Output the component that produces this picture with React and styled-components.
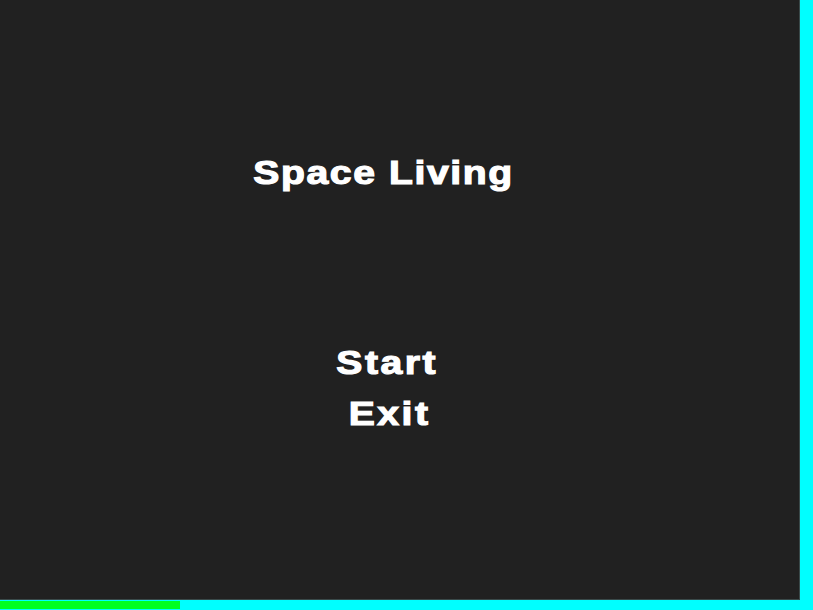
import styled, { createGlobalStyle } from 'styled-components';

const GlobalStyle = createGlobalStyle`
  html, body {
    margin: 0;
    padding: 0;
    background-color: #00ffff;
  }
`;

const Screen = styled.div`
  box-sizing: border-box;
  display: flex;
  flex-direction: column;
  width: 800px;
  height: 600px;
  background-color: #212121;
  border-right: 1px solid #3a4a4a;
  border-bottom: 1px solid #3a4a4a;
  font-family: 'Liberation Sans', Arial, sans-serif;
  font-weight: 700;
  color: #ffffff;
`;

const Title = styled.h1`
  margin: 0;
  padding: 147px 0 0 0;
  width: 767px;
  text-align: center;
  font-size: 34px;
  line-height: 51px;
  font-weight: 700;
  -webkit-text-stroke: 1.2px #ffffff;
  letter-spacing: 1.4px;
  transform: scaleX(1.15);
`;

const Menu = styled.nav`
  display: flex;
  flex-direction: column;
  align-items: center;
  width: 774px;
  margin-top: 139px;
`;

const MenuItem = styled.div`
  font-size: 34px;
  line-height: 51px;
  -webkit-text-stroke: 1.2px #ffffff;
  letter-spacing: 2.2px;
  transform: scaleX(1.15);
  margin-left: ${(p) => p.$shift || 0}px;
`;

const LoadBar = styled.div`
  width: 180px;
  height: 8px;
  margin-top: 1px;
  background-color: #00ff22;
`;

const App = () => {
  return (
    <>
      <GlobalStyle />
      <Screen>
        <Title>Space Living</Title>
        <Menu>
          <MenuItem>Start</MenuItem>
          <MenuItem $shift={5}>Exit</MenuItem>
        </Menu>
      </Screen>
      <LoadBar />
    </>
  );
};

export default App;
